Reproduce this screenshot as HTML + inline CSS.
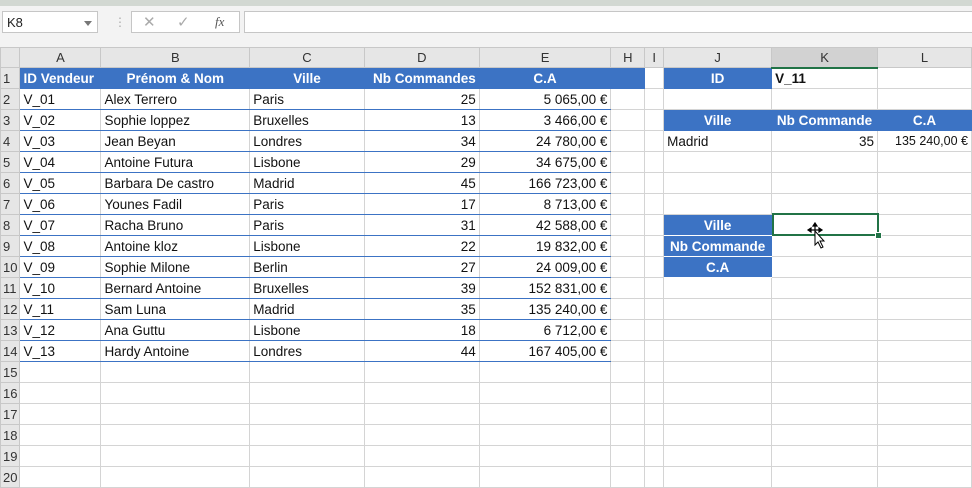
<!DOCTYPE html>
<html><head><meta charset="utf-8"><style>
body{margin:0;width:972px;height:476px;overflow:hidden;background:#fff;font-family:"Liberation Sans",sans-serif;position:relative}
.top{position:absolute;left:0;top:0;width:972px;height:6px;background:#d2d8d2}
.fbar{position:absolute;left:0;top:6px;width:972px;height:41px;background:#f3f3f3;border-bottom:1px solid #d0d0d0}
.nb{position:absolute;left:2px;top:5px;width:96px;height:22px;background:#fff;border:1px solid #c6c6c6;font-size:13px;line-height:22px;padding-left:4px;box-sizing:border-box;color:#222}
.nb:after{content:"";position:absolute;right:5px;top:9px;border:4px solid transparent;border-top:5px solid #777}
.fx{position:absolute;left:131px;top:5px;width:109px;height:22px;background:#fff;border:1px solid #c6c6c6;box-sizing:border-box}
.fin{position:absolute;left:244px;top:5px;width:730px;height:22px;background:#fff;border:1px solid #c6c6c6;box-sizing:border-box}
table{position:absolute;left:0;top:47px;border-collapse:collapse;table-layout:fixed;font-size:13.5px}
tr{height:21px}
tr.h{height:20px}
td{padding:0 3px;border:1px solid #d4d4d4;white-space:nowrap;overflow:hidden;color:#111}
tr.h td{background:#e6e6e6;text-align:center;color:#333;font-size:13px;border-color:#c8c8c8}
td.r{background:#e6e6e6;text-align:left;color:#333;font-size:13px;border-color:#c8c8c8;padding:0 2px}
.b{background:#3c73c4;color:#fff;font-weight:bold;border-color:#3c73c4;text-align:center}
.bw{border-bottom:1px solid #fff;border-top:1px solid #fff}
.n{text-align:right}
.t td.d{border-bottom:1px solid #3c73c4}
.sel{position:absolute;left:772px;top:213px;width:107px;height:23px;border:2px solid #217346;box-sizing:border-box}
.sel:after{content:"";position:absolute;right:-5px;bottom:-5px;width:5px;height:5px;background:#217346;border:1px solid #fff}
</style></head><body>
<div class="top"></div>
<div class="fbar">
<div class="nb">K8</div>
<div style="position:absolute;left:114px;top:9px;color:#aaa;font-size:12px">⋮</div>
<div class="fx"><span style="position:absolute;left:11px;top:1px;color:#aaa;font-size:15px">✕</span><span style="position:absolute;left:45px;top:1px;color:#aaa;font-size:15px">✓</span><span style="position:absolute;left:83px;top:2px;color:#555;font-size:13px;font-style:italic;font-family:'Liberation Serif',serif">fx</span></div>
<div class="fin"></div>
</div>
<table>
<colgroup><col style="width:19px"><col style="width:81px"><col style="width:149px"><col style="width:115px"><col style="width:115px"><col style="width:132px"><col style="width:34px"><col style="width:19px"><col style="width:108px"><col style="width:106px"><col style="width:94px"></colgroup>
<tr class="h"><td></td><td>A</td><td>B</td><td>C</td><td>D</td><td>E</td><td>H</td><td>I</td><td>J</td><td style="background:#d2d2d2;border-bottom:2px solid #217346">K</td><td>L</td></tr>
<tr><td class="r">1</td><td class="b" style="text-align:left">ID Vendeur</td><td class="b">Prénom &amp; Nom</td><td class="b">Ville</td><td class="b" style="text-align:right">Nb Commandes</td><td class="b">C.A</td><td class="b"></td><td></td><td class="b">ID</td><td style="font-weight:bold">V_11</td><td></td></tr>
<tbody class="t">
<tr><td class="r">2</td><td class="d">V_01</td><td class="d">Alex Terrero</td><td class="d">Paris</td><td class="d n">25</td><td class="d n">5 065,00 €</td><td></td><td></td><td></td><td></td><td></td></tr>
<tr><td class="r">3</td><td class="d">V_02</td><td class="d">Sophie loppez</td><td class="d">Bruxelles</td><td class="d n">13</td><td class="d n">3 466,00 €</td><td></td><td></td><td class="b">Ville</td><td class="b">Nb Commande</td><td class="b">C.A</td></tr>
<tr><td class="r">4</td><td class="d">V_03</td><td class="d">Jean Beyan</td><td class="d">Londres</td><td class="d n">34</td><td class="d n">24 780,00 €</td><td></td><td></td><td>Madrid</td><td class="n">35</td><td class="n" style="font-size:12.5px">135 240,00 €</td></tr>
<tr><td class="r">5</td><td class="d">V_04</td><td class="d">Antoine Futura</td><td class="d">Lisbone</td><td class="d n">29</td><td class="d n">34 675,00 €</td><td></td><td></td><td></td><td></td><td></td></tr>
<tr><td class="r">6</td><td class="d">V_05</td><td class="d">Barbara De castro</td><td class="d">Madrid</td><td class="d n">45</td><td class="d n">166 723,00 €</td><td></td><td></td><td></td><td></td><td></td></tr>
<tr><td class="r">7</td><td class="d">V_06</td><td class="d">Younes Fadil</td><td class="d">Paris</td><td class="d n">17</td><td class="d n">8 713,00 €</td><td></td><td></td><td></td><td></td><td></td></tr>
<tr><td class="r">8</td><td class="d">V_07</td><td class="d">Racha Bruno</td><td class="d">Paris</td><td class="d n">31</td><td class="d n">42 588,00 €</td><td></td><td></td><td class="b bw">Ville</td><td></td><td></td></tr>
<tr><td class="r">9</td><td class="d">V_08</td><td class="d">Antoine kloz</td><td class="d">Lisbone</td><td class="d n">22</td><td class="d n">19 832,00 €</td><td></td><td></td><td class="b bw" style="padding:0 1px">Nb Commande</td><td></td><td></td></tr>
<tr><td class="r">10</td><td class="d">V_09</td><td class="d">Sophie Milone</td><td class="d">Berlin</td><td class="d n">27</td><td class="d n">24 009,00 €</td><td></td><td></td><td class="b bw">C.A</td><td></td><td></td></tr>
<tr><td class="r">11</td><td class="d">V_10</td><td class="d">Bernard Antoine</td><td class="d">Bruxelles</td><td class="d n">39</td><td class="d n">152 831,00 €</td><td></td><td></td><td></td><td></td><td></td></tr>
<tr><td class="r">12</td><td class="d">V_11</td><td class="d">Sam Luna</td><td class="d">Madrid</td><td class="d n">35</td><td class="d n">135 240,00 €</td><td></td><td></td><td></td><td></td><td></td></tr>
<tr><td class="r">13</td><td class="d">V_12</td><td class="d">Ana Guttu</td><td class="d">Lisbone</td><td class="d n">18</td><td class="d n">6 712,00 €</td><td></td><td></td><td></td><td></td><td></td></tr>
<tr><td class="r">14</td><td class="d">V_13</td><td class="d">Hardy Antoine</td><td class="d">Londres</td><td class="d n">44</td><td class="d n">167 405,00 €</td><td></td><td></td><td></td><td></td><td></td></tr>
</tbody>
<tr><td class="r">15</td><td></td><td></td><td></td><td></td><td></td><td></td><td></td><td></td><td></td><td></td></tr>
<tr><td class="r">16</td><td></td><td></td><td></td><td></td><td></td><td></td><td></td><td></td><td></td><td></td></tr>
<tr><td class="r">17</td><td></td><td></td><td></td><td></td><td></td><td></td><td></td><td></td><td></td><td></td></tr>
<tr><td class="r">18</td><td></td><td></td><td></td><td></td><td></td><td></td><td></td><td></td><td></td><td></td></tr>
<tr><td class="r">19</td><td></td><td></td><td></td><td></td><td></td><td></td><td></td><td></td><td></td><td></td></tr>
<tr><td class="r">20</td><td></td><td></td><td></td><td></td><td></td><td></td><td></td><td></td><td></td><td></td></tr>
</table>
<div class="sel"></div>
<svg style="position:absolute;left:806px;top:222px" width="22" height="28" viewBox="0 0 22 28"><path d="M9 1v14M2 8h14M9 1l-2 3h4zM2 8l3-2v4zM16 8l-3-2v4z" stroke="#000" stroke-width="1.2" fill="#000"/><path d="M9 9v14l3-3 3 6 2-1-3-6h4z" fill="#fff" stroke="#000" stroke-width="1"/></svg>
</body></html>
